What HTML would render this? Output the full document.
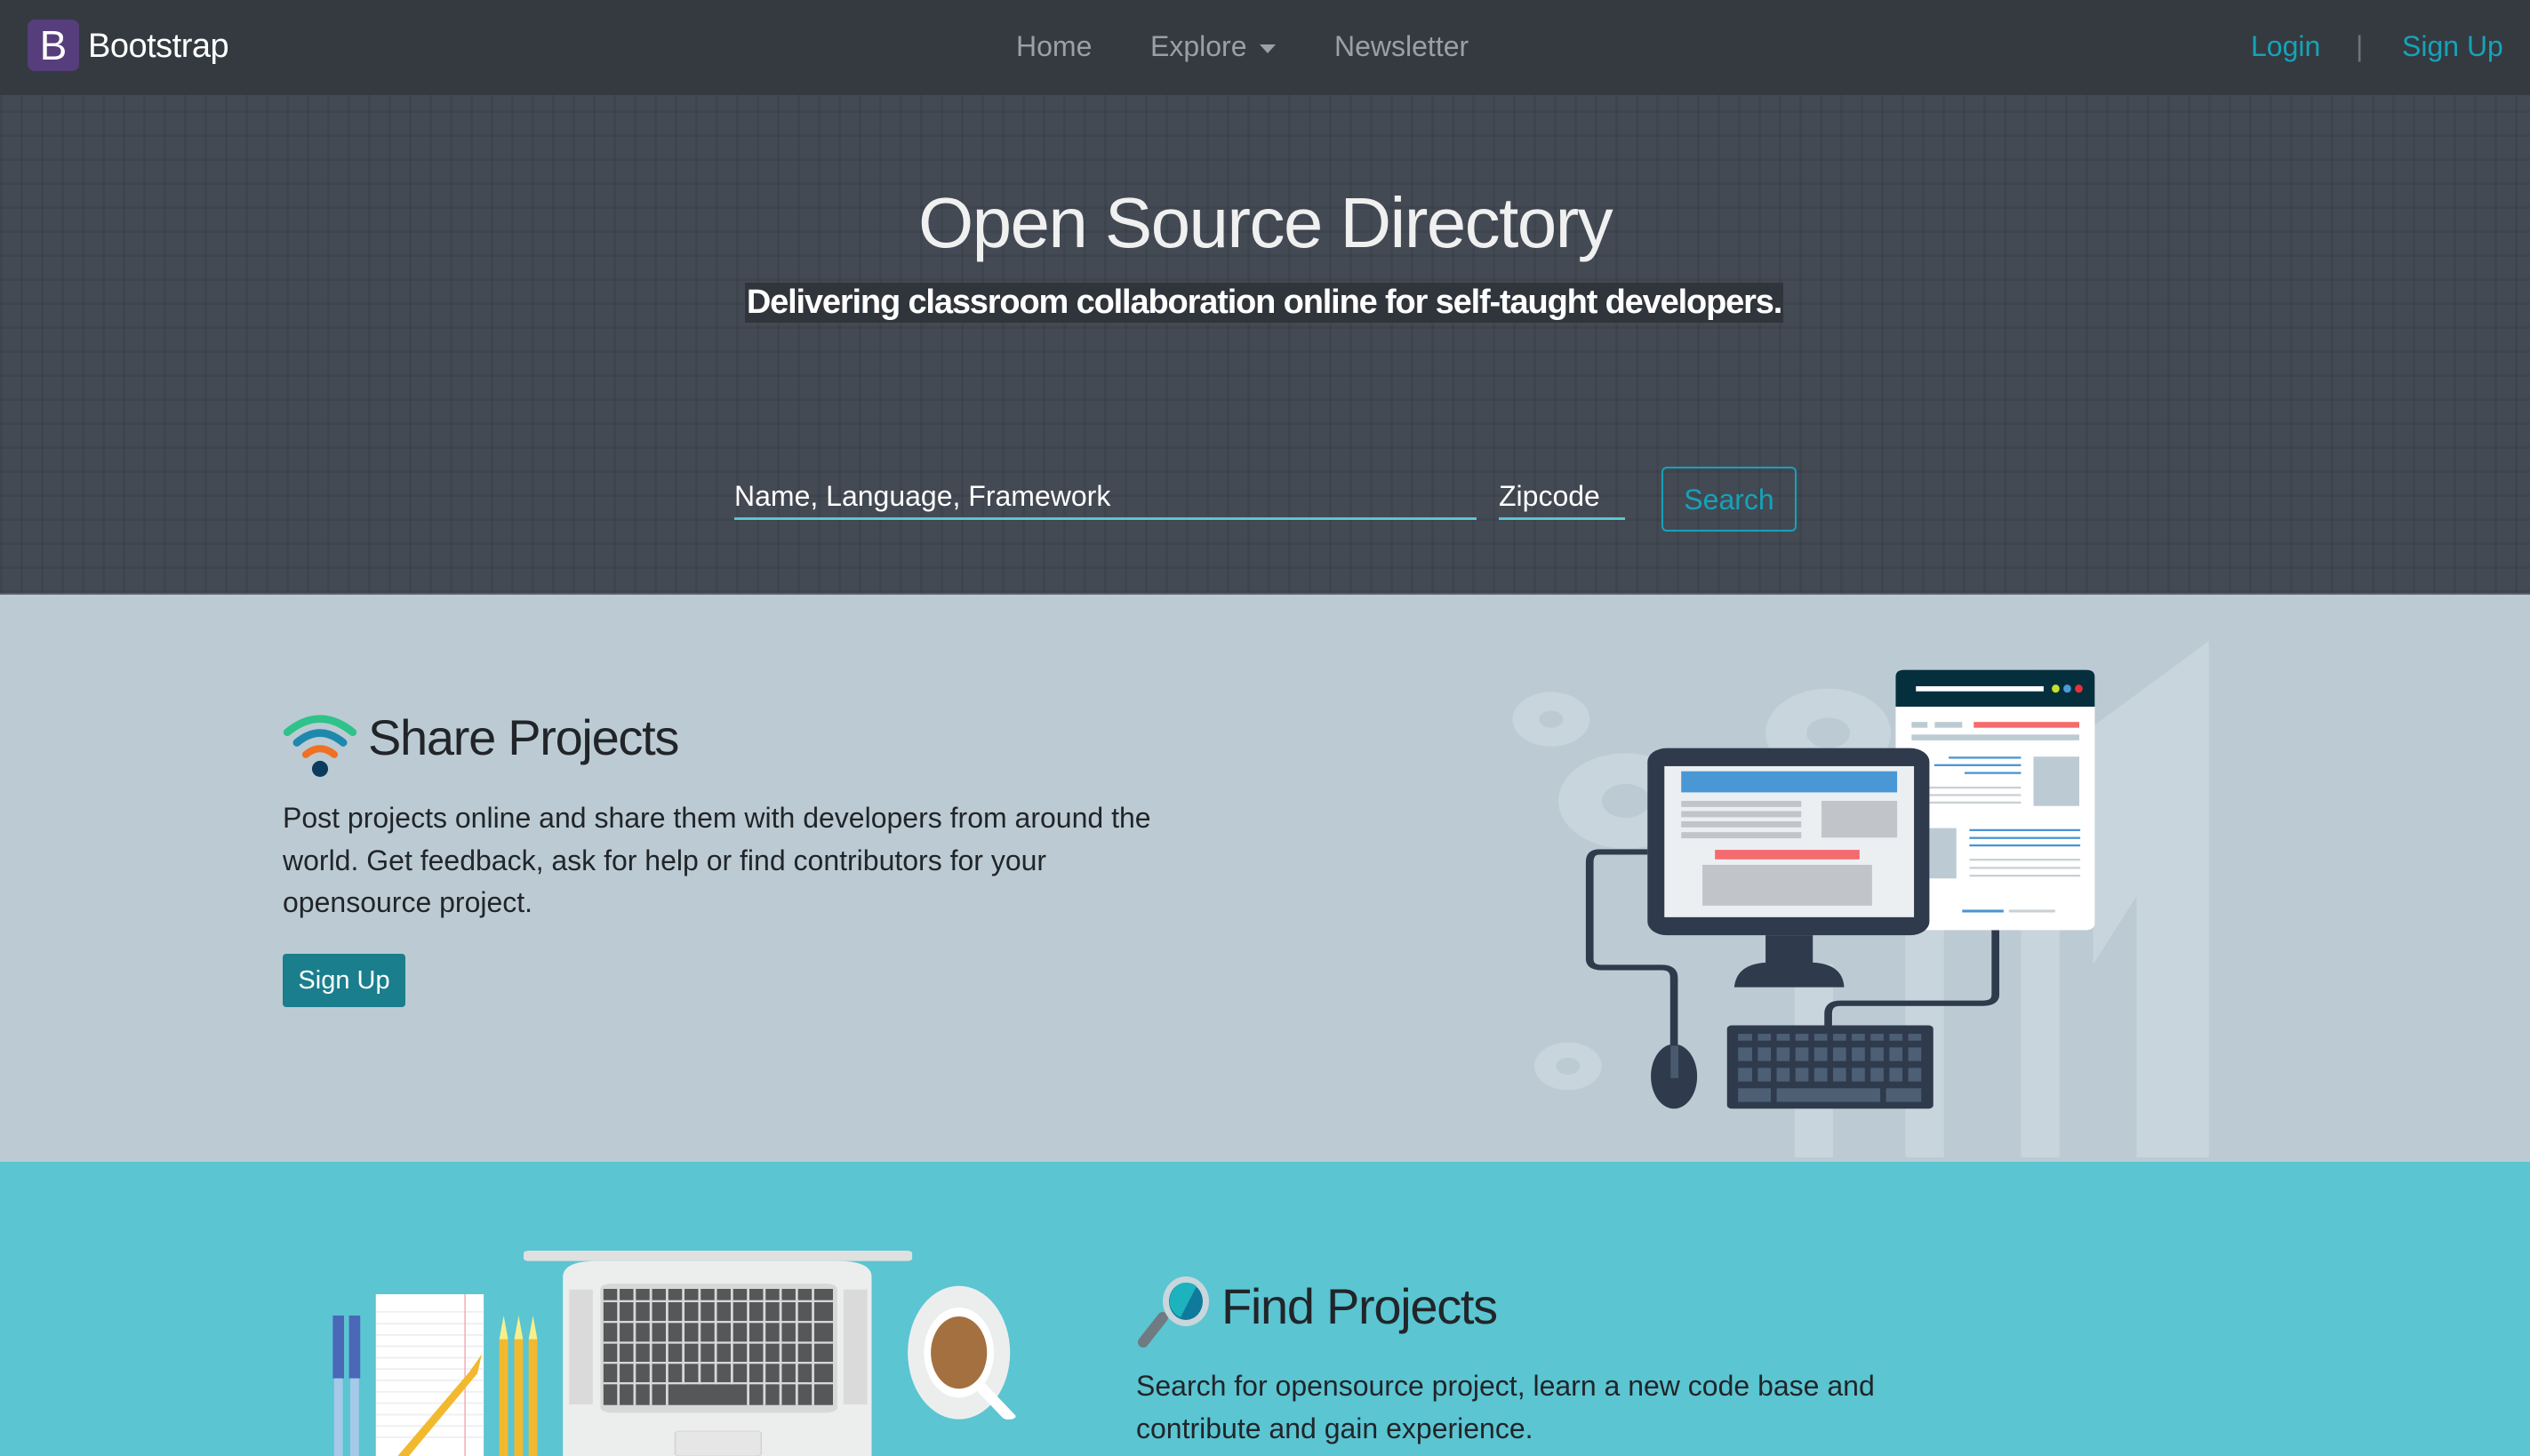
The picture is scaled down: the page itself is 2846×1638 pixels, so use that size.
<!DOCTYPE html>
<html><head><meta charset="utf-8"><style>
*{margin:0;padding:0;box-sizing:border-box}
body{width:2846px;height:1638px;overflow:hidden;font-family:"Liberation Sans",sans-serif;position:relative;background:#5bc5d2}
.abs{position:absolute}
#nav{left:0;top:0;width:2846px;height:107px;background:#343a40}
#hero{left:0;top:107px;width:2846px;height:560px;background-color:#434a54;
background-image:repeating-linear-gradient(90deg,rgba(0,0,0,.07) 0 3px,transparent 3px 23px),repeating-linear-gradient(0deg,rgba(0,0,0,.07) 0 3px,transparent 3px 27px);}
#gray{left:0;top:667px;width:2846px;height:640px;background:#bccbd3;overflow:hidden;border-top:2px solid #5a626b}
.nl{top:34px;font-size:32px;color:#9aa0a6}
.t{white-space:nowrap}
</style></head><body>
<div id="nav" class="abs"></div>
<div class="abs" style="left:31px;top:22px;width:58px;height:58px;background:#563d7c;border-radius:8px;color:#fff;font-size:46px;text-align:center;line-height:58px">B</div>
<div class="abs t" style="left:99px;top:31px;font-size:38px;color:#fff;letter-spacing:-0.5px">Bootstrap</div>
<div class="abs t nl" style="left:1143px">Home</div>
<div class="abs t nl" style="left:1294px">Explore <span style="display:inline-block;width:0;height:0;border-left:9px solid transparent;border-right:9px solid transparent;border-top:10px solid #9aa0a6;vertical-align:middle;margin-left:6px"></span></div>
<div class="abs t nl" style="left:1501px">Newsletter</div>
<div class="abs t nl" style="left:2532px;color:#17a2b8">Login</div>
<div class="abs t nl" style="left:2650px;color:#6c757d">|</div>
<div class="abs t nl" style="left:2702px;color:#17a2b8">Sign Up</div>

<div id="hero" class="abs"></div>
<div class="abs t" style="left:0;width:2846px;top:205px;text-align:center;font-size:80px;color:#f0f0f0;letter-spacing:-1.6px">Open Source Directory</div>
<div class="abs t" style="left:838px;top:318px;width:1168px;height:45px;background:#30353c;color:#fff;font-size:38px;line-height:45px;text-align:center;font-weight:bold;letter-spacing:-1.15px">Delivering classroom collaboration online for self-taught developers.</div>
<div class="abs t" style="left:826px;top:540px;width:835px;height:45px;border-bottom:3px solid #5bc5d2;font-size:32px;color:#fff">Name, Language, Framework</div>
<div class="abs t" style="left:1686px;top:540px;width:142px;height:45px;border-bottom:3px solid #5bc5d2;font-size:32px;color:#fff">Zipcode</div>
<div class="abs t" style="left:1869px;top:525px;width:152px;height:73px;border:2px solid #17a2b8;border-radius:6px;color:#17a2b8;font-size:32px;line-height:71px;text-align:center">Search</div>

<div id="gray" class="abs">
<svg class="abs" style="left:1650px;top:33px" width="850" height="600" viewBox="0 0 1568 1568" preserveAspectRatio="none">
<g fill="#c8d5dc">
<circle cx="175" cy="280" r="80"/><circle cx="750" cy="320" r="130"/><circle cx="330" cy="520" r="140"/><circle cx="210" cy="1300" r="70"/>
<polygon points="1300,300 1540,50 1540,1568 1390,1568 1390,800 1300,1000"/>
<rect x="680" y="1000" width="80" height="568"/><rect x="910" y="900" width="80" height="668"/><rect x="1150" y="900" width="80" height="668"/>
</g>
<g fill="#bccbd3"><circle cx="175" cy="280" r="25"/><circle cx="750" cy="320" r="45"/><circle cx="330" cy="520" r="50"/><circle cx="210" cy="1300" r="25"/></g>
<g fill="none" stroke="#2f3b4c" stroke-width="16">
<path d="M375 670 H275 Q255 670 255 700 V985 Q255 1010 280 1010 H405 Q430 1010 430 1040 V1240"/>
<path d="M1097 900 V1090 Q1097 1115 1070 1115 H775 Q750 1115 750 1145 V1185"/>
</g>
<rect x="890" y="135" width="413" height="765" rx="18" fill="#fff"/>
<path d="M908 135 H1285 Q1303 135 1303 155 V243 H890 V155 Q890 135 908 135Z" fill="#062f3e"/>
<rect x="932" y="183" width="265" height="15" fill="#fff"/>
<ellipse cx="1222" cy="190" rx="8" ry="12" fill="#c4e22a"/><ellipse cx="1246" cy="190" rx="8" ry="12" fill="#4b9bd8"/><ellipse cx="1270" cy="190" rx="8" ry="12" fill="#e8303a"/>
<rect x="923" y="288" width="33" height="17" fill="#bccbd3"/><rect x="971" y="288" width="57" height="17" fill="#bccbd3"/><rect x="1052" y="288" width="219" height="17" fill="#f46b6b"/>
<rect x="923" y="325" width="348" height="17" fill="#bccbd3"/>
<rect x="1176" y="390" width="95" height="145" fill="#bccbd3"/>
<g fill="#4b94d3"><rect x="1000" y="390" width="150" height="6"/><rect x="970" y="412" width="180" height="6"/><rect x="1033" y="435" width="117" height="6"/><rect x="1043" y="603" width="230" height="6"/><rect x="1043" y="626" width="230" height="6"/><rect x="1043" y="648" width="230" height="6"/><rect x="1028" y="840" width="86" height="8"/></g>
<g fill="#c9d0d4"><rect x="960" y="478" width="190" height="6"/><rect x="960" y="500" width="190" height="6"/><rect x="960" y="522" width="190" height="6"/><rect x="1043" y="690" width="230" height="6"/><rect x="1043" y="714" width="230" height="6"/><rect x="1043" y="737" width="230" height="6"/><rect x="1125" y="840" width="96" height="8"/><rect x="960" y="600" width="56" height="148" fill="#bccbd3"/></g>
<rect x="375" y="365" width="585" height="550" rx="40" fill="#2f3b4c"/>
<rect x="410" y="418" width="518" height="444" fill="#eceff1"/>
<rect x="445" y="433" width="448" height="62" fill="#4a97d6"/>
<g fill="#c1c5c9"><rect x="445" y="520" width="249" height="18"/><rect x="445" y="550" width="249" height="18"/><rect x="445" y="580" width="249" height="18"/><rect x="445" y="612" width="249" height="18"/><rect x="736" y="520" width="157" height="108"/><rect x="489" y="708" width="352" height="120"/></g>
<rect x="515" y="664" width="300" height="28" fill="#f46b6f"/>
<rect x="620" y="915" width="98" height="85" fill="#2f3b4c"/>
<path d="M555 1068 Q560 995 630 995 H710 Q780 995 783 1068Z" fill="#2f3b4c"/>
<ellipse cx="430" cy="1330" rx="48" ry="95" fill="#2f3b4c"/>
<rect x="423" y="1240" width="16" height="95" fill="#4a5a6e"/>
<rect x="540" y="1180" width="428" height="245" rx="10" fill="#2f3b4c"/>
<g fill="#4d5f75">
<rect x="563" y="1205" width="380" height="20"/>
<rect x="563" y="1245" width="380" height="40"/><rect x="563" y="1305" width="380" height="40"/>
<rect x="563" y="1365" width="68" height="40"/><rect x="643" y="1365" width="215" height="40"/><rect x="870" y="1365" width="73" height="40"/>
</g>
<g fill="#2f3b4c"><rect x="592" y="1200" width="12" height="150"/><rect x="631" y="1200" width="12" height="150"/><rect x="670" y="1200" width="12" height="150"/><rect x="709" y="1200" width="12" height="150"/><rect x="748" y="1200" width="12" height="150"/><rect x="787" y="1200" width="12" height="150"/><rect x="826" y="1200" width="12" height="150"/><rect x="865" y="1200" width="12" height="150"/><rect x="904" y="1200" width="12" height="150"/></g>
</svg>
</div>

<svg class="abs" style="left:318px;top:802px" width="84" height="72" viewBox="55 65 250 215">
<path d="M70 130 Q180 40 290 130" fill="none" stroke="#2fc28a" stroke-width="26" stroke-linecap="round"/>
<path d="M102 165 Q180 100 258 165" fill="none" stroke="#1f88ad" stroke-width="26" stroke-linecap="round"/>
<path d="M132 205 Q180 165 228 205" fill="none" stroke="#ee7124" stroke-width="24" stroke-linecap="round"/>
<circle cx="180" cy="253" r="27" fill="#0b3b5e"/>
</svg>
<div class="abs t" style="left:414px;top:797px;font-size:56px;color:#212529;letter-spacing:-1.3px">Share Projects</div>
<div class="abs" style="left:318px;top:897px;width:1000px;font-size:32px;line-height:47.5px;color:#212529">Post projects online and share them with developers from around the world. Get feedback, ask for help or find contributors for your opensource project.</div>
<div class="abs t" style="left:318px;top:1073px;width:138px;height:60px;background:#1a7e8d;border-radius:4px;color:#fff;font-size:29px;line-height:60px;text-align:center">Sign Up</div>

<svg class="abs" style="left:300px;top:1310px" width="1100" height="328" viewBox="0 0 1568 984" preserveAspectRatio="none">
<rect x="175" y="438" width="173" height="546" fill="#fff"/>
<g fill="#eceeef"><rect x="175" y="495" width="173" height="5"/><rect x="175" y="535" width="173" height="5"/><rect x="175" y="573" width="173" height="5"/><rect x="175" y="611" width="173" height="5"/><rect x="175" y="650" width="173" height="5"/><rect x="175" y="688" width="173" height="5"/><rect x="175" y="726" width="173" height="5"/><rect x="175" y="765" width="173" height="5"/><rect x="175" y="803" width="173" height="5"/><rect x="175" y="842" width="173" height="5"/><rect x="175" y="880" width="173" height="5"/><rect x="175" y="918" width="173" height="5"/></g>
<rect x="317" y="438" width="2" height="546" fill="#f4a7b0"/>
<path d="M210 984 L325 700 L345 640 L338 705 L228 984Z" fill="#f2b92f"/>
<g fill="#4a67b8"><rect x="106" y="510" width="18" height="212"/><rect x="132" y="510" width="18" height="212"/></g>
<g fill="#a6c9e8"><rect x="108" y="722" width="14" height="262"/><rect x="134" y="722" width="14" height="262"/></g>
<g fill="#f2b92f"><rect x="373" y="590" width="14" height="394"/><rect x="397" y="590" width="14" height="394"/><rect x="420" y="590" width="14" height="394"/></g>
<g fill="#f8ef8a"><path d="M373 590 L380 510 L387 590Z"/><path d="M397 590 L404 510 L411 590Z"/><path d="M420 590 L427 510 L434 590Z"/></g>
<rect x="412" y="291" width="623" height="35" rx="8" fill="#e0e0e0"/>
<path d="M475 984 V380 Q475 326 530 326 H915 Q970 326 970 380 V984Z" fill="#eceeee"/>
<rect x="485" y="422" width="38" height="388" fill="#dadada"/><rect x="925" y="422" width="38" height="388" fill="#dadada"/>
<rect x="535" y="402" width="380" height="436" rx="18" fill="#d8d8d8"/>
<rect x="540" y="420" width="368" height="392" fill="#555759"/>
<g fill="#d8d8d8"><rect x="540" y="458" width="368" height="7"/><rect x="540" y="528" width="368" height="7"/><rect x="540" y="598" width="368" height="7"/><rect x="540" y="666" width="368" height="7"/><rect x="540" y="735" width="368" height="7"/>
<rect x="562" y="420" width="4" height="392"/><rect x="588" y="420" width="4" height="392"/><rect x="614" y="420" width="4" height="392"/><rect x="640" y="420" width="4" height="392"/><rect x="666" y="420" width="4" height="322"/><rect x="692" y="420" width="4" height="322"/><rect x="718" y="420" width="4" height="322"/><rect x="744" y="420" width="4" height="322"/><rect x="770" y="420" width="4" height="392"/><rect x="796" y="420" width="4" height="392"/><rect x="822" y="420" width="4" height="392"/><rect x="848" y="420" width="4" height="392"/><rect x="874" y="420" width="4" height="392"/></g>
<rect x="655" y="900" width="138" height="84" rx="8" fill="#e6e6e6" stroke="#d0d0d0" stroke-width="2"/>
<ellipse cx="1110" cy="635" rx="82" ry="225" fill="#eceeee"/>
<path d="M1140 740 L1190 850" stroke="#fff" stroke-width="22" stroke-linecap="round"/>
<ellipse cx="1110" cy="635" rx="56" ry="152" fill="#fff"/>
<ellipse cx="1110" cy="635" rx="45" ry="122" fill="#a4703f"/>
</svg>

<svg class="abs" style="left:1276px;top:1432px" width="88" height="88" viewBox="0 0 88 88">
<path d="M10 78 L32 50" stroke="#6f7a82" stroke-width="12" stroke-linecap="round"/>
<ellipse cx="58" cy="32" rx="26" ry="28" fill="#c9d6dc"/>
<ellipse cx="58" cy="32" rx="19" ry="21" fill="#0f7a9c"/>
<path d="M40 36 A19 21 0 0 1 70 15 L52 50 A19 21 0 0 1 40 36Z" fill="#1cb3be"/>
</svg>
<div class="abs t" style="left:1374px;top:1437px;font-size:56px;color:#212529;letter-spacing:-1.3px">Find Projects</div>
<div class="abs" style="left:1278px;top:1536px;width:900px;font-size:32px;line-height:47.5px;color:#212529">Search for opensource project, learn a new code base and contribute and gain experience.</div>
</body></html>
